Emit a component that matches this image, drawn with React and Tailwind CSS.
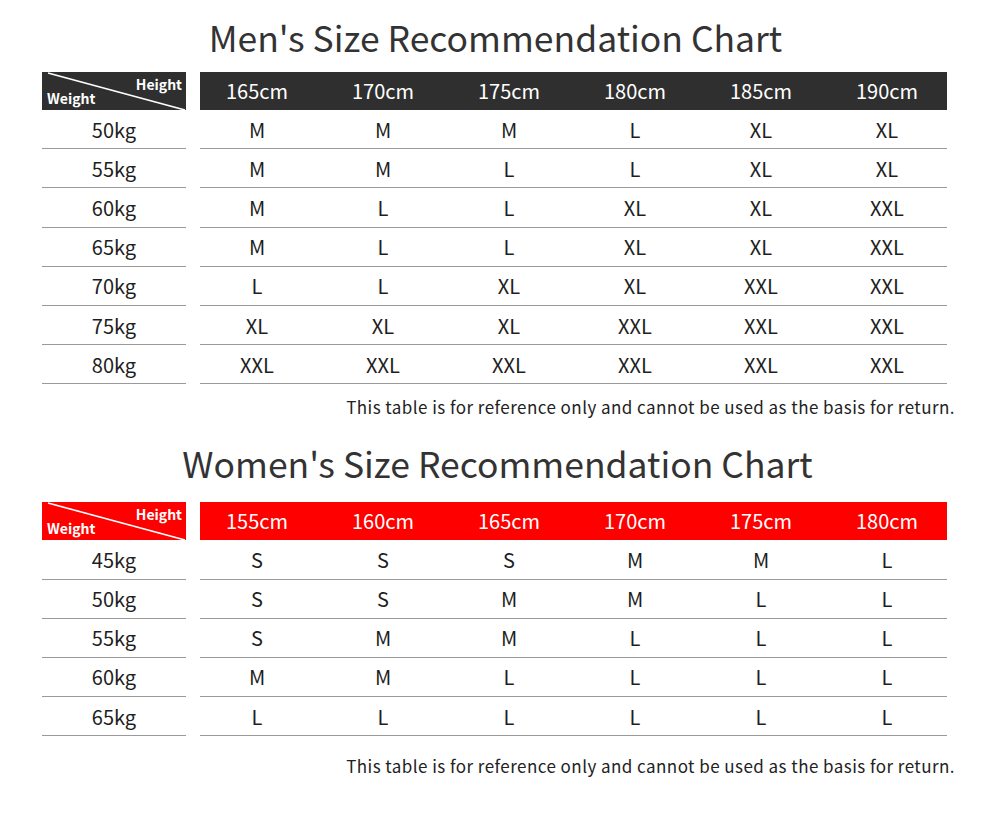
const MEN = {
  title: "Men's Size Recommendation Chart",
  heights: ["165cm", "170cm", "175cm", "180cm", "185cm", "190cm"],
  rows: [
    ["50kg", "M", "M", "M", "L", "XL", "XL"],
    ["55kg", "M", "M", "L", "L", "XL", "XL"],
    ["60kg", "M", "L", "L", "XL", "XL", "XXL"],
    ["65kg", "M", "L", "L", "XL", "XL", "XXL"],
    ["70kg", "L", "L", "XL", "XL", "XXL", "XXL"],
    ["75kg", "XL", "XL", "XL", "XXL", "XXL", "XXL"],
    ["80kg", "XXL", "XXL", "XXL", "XXL", "XXL", "XXL"],
  ],
};

const WOMEN = {
  title: "Women's Size Recommendation Chart",
  heights: ["155cm", "160cm", "165cm", "170cm", "175cm", "180cm"],
  rows: [
    ["45kg", "S", "S", "S", "M", "M", "L"],
    ["50kg", "S", "S", "M", "M", "L", "L"],
    ["55kg", "S", "M", "M", "L", "L", "L"],
    ["60kg", "M", "M", "L", "L", "L", "L"],
    ["65kg", "L", "L", "L", "L", "L", "L"],
  ],
};

const NOTE = "This table is for reference only and cannot be used as the basis for return.";

function Chart({ data, red }) {
  const head = red ? "bg-[#ff0000]" : "bg-[#2f2f2f]";
  return (
    <div>
      <h2 className={`text-center text-[35.5px] leading-[38px] text-[#333] ${red ? "pr-[5px]" : "pr-[9px]"}`}>{data.title}</h2>

      <div className={`flex gap-[14px] pl-[42px] ${red ? "mt-[20px]" : "mt-[16px]"}`}>
        {/* weight column */}
        <div className="w-[144px]">
          <div className={`relative h-[38px] ${head} text-white`}>
            <svg className="absolute inset-0" width="144" height="38" viewBox="0 0 144 38">
              <line x1="6" y1="1" x2="143" y2="38" stroke="white" strokeWidth="1.6" />
            </svg>
            <span className="absolute right-[4px] top-[2px] text-[14px] font-bold">Height</span>
            <span className="absolute left-[5px] bottom-[1px] text-[14px] font-bold">Weight</span>
          </div>
          {data.rows.map((r) => (
            <div key={r[0]} className="flex h-[39.2px] items-center justify-center border-b border-[#9a9a9a] pt-[1px] text-[20px] text-[#1e1e1e]">
              {r[0]}
            </div>
          ))}
        </div>

        {/* size columns */}
        <div className="w-[747px]">
          <div className={`h-[38px] ${head}`}>
            <div className="ml-[-6px] grid h-full w-[756px] grid-cols-6 items-center text-center text-[20px] text-white">
              {data.heights.map((h) => (
                <span key={h}>{h}</span>
              ))}
            </div>
          </div>
          {data.rows.map((r) => (
            <div key={r[0]} className="h-[39.2px] border-b border-[#9a9a9a] pt-[1px]">
              <div className="ml-[-6px] grid h-full w-[756px] grid-cols-6 items-center text-center text-[20px] text-[#1e1e1e]">
                {r.slice(1).map((s, i) => (
                  <span key={i}>{s}</span>
                ))}
              </div>
            </div>
          ))}
        </div>
      </div>

      <p className={`pr-[45px] text-right text-[17px] leading-[20px] tracking-[0.45px] text-[#222] ${red ? "mt-[20px]" : "mt-[13px]"}`}>{NOTE}</p>
    </div>
  );
}

export default function App() {
  return (
    <main
      className="h-[833px] w-[1000px] bg-white pt-[18px]"
      style={{ fontFamily: '"Noto Sans CJK SC", "Noto Sans", sans-serif' }}
    >
      <Chart data={MEN} />
      <div className="mt-[27px]">
        <Chart data={WOMEN} red />
      </div>
    </main>
  );
}
